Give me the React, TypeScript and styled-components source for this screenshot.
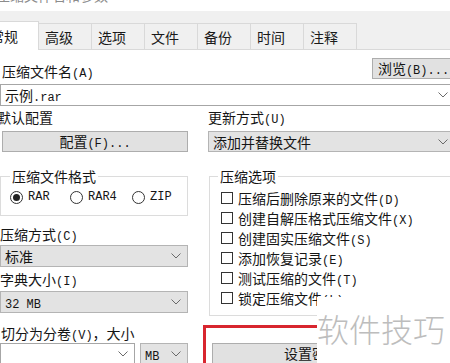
import * as React from "react"
import styled, { createGlobalStyle } from "styled-components"

const GlobalStyle = createGlobalStyle`
    html, body {
        margin: 0;
        padding: 0;
        background: #fff;
    }
    body {
        font-family: "Noto Sans CJK SC", "Liberation Sans", sans-serif;
        font-size: 14px;
        color: #151515;
    }
`

const Window = styled.div`
    position: relative;
    width: 450px;
    height: 363px;
    overflow: hidden;
    background: #fff;
`

const Inner = styled.div`
    width: 455px;
`

const TitleBar = styled.div`
    height: 11px;
    display: flex;
    justify-content: space-between;
    overflow: hidden;
    color: #8c8c8c;
`

const Title = styled.span`
    margin: -13px 0 0 -4px;
    line-height: 16px;
    white-space: nowrap;
`

const Help = styled.span`
    margin: -13px 46px 0 0;
    line-height: 16px;
    font-family: "Liberation Sans", sans-serif;
`

const TabStrip = styled.div`
    height: 38px;
    margin-left: -17px;
    display: flex;
    align-items: flex-end;
    background: #f0f0f0;
    border-bottom: 1px solid #d9d9d9;
`

const Tab = styled.div<{ $active?: boolean }>`
    box-sizing: border-box;
    height: ${p => (p.$active ? "29px" : "26px")};
    margin-bottom: ${p => (p.$active ? "-1px" : "0")};
    padding: ${p => (p.$active ? "0 20px 0 6px" : "0 18px 0 6px")};
    display: flex;
    align-items: center;
    background: ${p => (p.$active ? "#fff" : "#f0f0f0")};
    border: 1px solid #d9d9d9;
    border-bottom: none;
    border-left: ${p => (p.$active ? "1px solid #d9d9d9" : "none")};
    color: #1a1a1a;
    white-space: nowrap;
`

const Body = styled.div`
    padding-top: 8px;
`

const NameRow = styled.div`
    display: flex;
    justify-content: space-between;
    align-items: flex-end;
    height: 21px;
`

const Label = styled.div<{ $mt?: number }>`
    height: 16px;
    margin-top: ${p => p.$mt || 0}px;
    line-height: 16px;
    white-space: nowrap;
`

const Lat = styled.span`
    font-family: "Liberation Mono", monospace;
    font-size: 12px;
    line-height: 1;
`

const Button = styled.div<{ $w?: number; $mt?: number }>`
    box-sizing: border-box;
    width: ${p => (p.$w ? p.$w + "px" : "auto")};
    height: 21px;
    margin-top: ${p => p.$mt || 0}px;
    display: flex;
    align-items: center;
    justify-content: center;
    background: #e1e1e1;
    border: 1px solid #adadad;
    line-height: 16px;
    white-space: nowrap;
`

const Combo = styled.div<{ $gray?: boolean; $w?: number; $h?: number; $mt?: number }>`
    box-sizing: border-box;
    width: ${p => (p.$w ? p.$w + "px" : "100%")};
    height: ${p => p.$h || 22}px;
    margin-top: ${p => p.$mt || 0}px;
    padding: 0 6px 0 4px;
    display: flex;
    align-items: center;
    justify-content: space-between;
    background: ${p => (p.$gray ? "#e3e3e3" : "#fff")};
    border: 1px solid ${p => (p.$gray ? "#b4b4b4" : "#a6a6a6")};
    line-height: 16px;
    white-space: nowrap;
`

const Columns = styled.div`
    display: grid;
    grid-template-columns: 188px 1fr;
    column-gap: 20px;
    margin-top: 3px;
`

const Col = styled.div`
    display: flex;
    flex-direction: column;
    align-items: stretch;
`

const GroupBox = styled.div<{ $ml?: number; $pb: number }>`
    margin: 24px 0 0 ${p => p.$ml || 0}px;
    padding-bottom: ${p => p.$pb}px;
    display: flex;
    flex-direction: column;
    border: 1px solid #dcdcdc;
`

const Legend = styled.span<{ $ml: number }>`
    align-self: flex-start;
    height: 16px;
    margin: -9px 0 0 ${p => p.$ml}px;
    padding: 0 2px;
    line-height: 16px;
    background: #fff;
`

const RadioRow = styled.div`
    display: grid;
    grid-template-columns: 60px 62px auto;
    height: 20px;
    margin-top: 3px;
    padding-left: 9px;
    align-items: center;
`

const RadioItem = styled.div`
    display: flex;
    align-items: center;
    gap: 5px;
`

const RadioCircle = styled.span<{ $on?: boolean }>`
    box-sizing: border-box;
    width: 13px;
    height: 13px;
    border: 1px solid #333;
    border-radius: 50%;
    display: flex;
    align-items: center;
    justify-content: center;
    background: #fff;

    &::after {
        content: "";
        width: 7px;
        height: 7px;
        border-radius: 50%;
        background: ${p => (p.$on ? "#222" : "transparent")};
    }
`

const CheckList = styled.div`
    margin-top: 4px;
    padding-left: 11px;
    display: flex;
    flex-direction: column;
`

const CheckRow = styled.div`
    height: 20px;
    display: flex;
    align-items: center;
    gap: 5px;
    line-height: 16px;
    white-space: nowrap;
`

const CheckBox = styled.span`
    box-sizing: border-box;
    width: 12px;
    height: 12px;
    flex: none;
    border: 1px solid #333;
    background: #fff;
`

const Highlight = styled.div`
    margin: 9px 0 0 -5px;
    padding: 15px 0 0 6px;
    border: 3px solid #d8262f;
    border-right: none;
    border-bottom: none;
`

const SplitRow = styled.div`
    display: flex;
    gap: 5px;
    margin-top: 2px;
`

const Watermark = styled.div`
    position: absolute;
    left: 317px;
    top: 297px;
    right: 0;
    bottom: 0;
    padding-top: 14px;
    background: #fff;
    color: #bdbdbd;
    font-size: 32px;
    font-weight: 300;
    line-height: 34px;
    white-space: nowrap;
`

const Chevron = () => (
    <svg width="10" height="6" viewBox="0 0 10 6">
        <polyline points="0.5,0.5 5,5 9.5,0.5" fill="none" stroke="#6a6a6a" strokeWidth="1" />
    </svg>
)

// CJK runs stay in the body font, ASCII runs get the narrow mono face
const T = ({ s }: { s: string }) => (
    <span>
        {s.split(/([\x00-\x7f]+)/).filter(Boolean).map((part, i) =>
            /^[\x00-\x7f]+$/.test(part) ? <Lat key={i}>{part}</Lat> : part
        )}
    </span>
)

const tabs = ["常规", "高级", "选项", "文件", "备份", "时间", "注释"]

const options = [
    "压缩后删除原来的文件(D)",
    "创建自解压格式压缩文件(X)",
    "创建固实压缩文件(S)",
    "添加恢复记录(E)",
    "测试压缩的文件(T)",
    "锁定压缩文件(L)",
]

const formats = [
    { name: "RAR", on: true },
    { name: "RAR4", on: false },
    { name: "ZIP", on: false },
]

export default function App() {
    return (
        <Window>
            <GlobalStyle />
            <Inner>
                <TitleBar>
                    <Title>压缩文件名和参数</Title>
                    <Help>?</Help>
                </TitleBar>
                <TabStrip>
                    {tabs.map((t, i) => (
                        <Tab key={t} $active={i === 0}>{t}</Tab>
                    ))}
                </TabStrip>

                <Body>
                    <NameRow>
                        <Label style={{ marginLeft: 2 }}><T s="压缩文件名(A)" /></Label>
                        <Button $w={83}><T s="浏览(B)..." /></Button>
                    </NameRow>
                    <Combo $mt={5}>
                        <T s="示例.rar" />
                        <Chevron />
                    </Combo>

                    <Columns>
                        <Col>
                            <Label style={{ marginLeft: -3 }}>默认配置</Label>
                            <Button $mt={6} style={{ marginLeft: 2 }}><T s="配置(F)..." /></Button>

                            <GroupBox $pb={8}>
                                <Legend $ml={9}>压缩文件格式</Legend>
                                <RadioRow>
                                    {formats.map(f => (
                                        <RadioItem key={f.name}>
                                            <RadioCircle $on={f.on} />
                                            <Lat>{f.name}</Lat>
                                        </RadioItem>
                                    ))}
                                </RadioRow>
                            </GroupBox>

                            <Label $mt={10}><T s="压缩方式(C)" /></Label>
                            <Combo $gray $mt={3}>
                                <span>标准</span>
                                <Chevron />
                            </Combo>

                            <Label $mt={4}><T s="字典大小(I)" /></Label>
                            <Combo $gray $mt={4}>
                                <T s="32 MB" />
                                <Chevron />
                            </Combo>

                            <Label $mt={12} style={{ marginLeft: 1 }}><T s="切分为分卷(V)，大小" /></Label>
                            <SplitRow>
                                <Combo $w={135}>
                                    <span />
                                    <Chevron />
                                </Combo>
                                <Combo $gray $w={48}>
                                    <T s="MB" />
                                    <Chevron />
                                </Combo>
                            </SplitRow>
                        </Col>

                        <Col>
                            <Label><T s="更新方式(U)" /></Label>
                            <Combo $gray $h={21} $mt={6}>
                                <span>添加并替换文件</span>
                                <Chevron />
                            </Combo>

                            <GroupBox $ml={1} $pb={7}>
                                <Legend $ml={8}>压缩选项</Legend>
                                <CheckList>
                                    {options.map(o => (
                                        <CheckRow key={o}>
                                            <CheckBox />
                                            <T s={o} />
                                        </CheckRow>
                                    ))}
                                </CheckList>
                            </GroupBox>

                            <Highlight>
                                <Button><T s="设置密码(P)..." /></Button>
                            </Highlight>
                        </Col>
                    </Columns>
                </Body>
            </Inner>
            <Watermark>软件技巧</Watermark>
        </Window>
    )
}
